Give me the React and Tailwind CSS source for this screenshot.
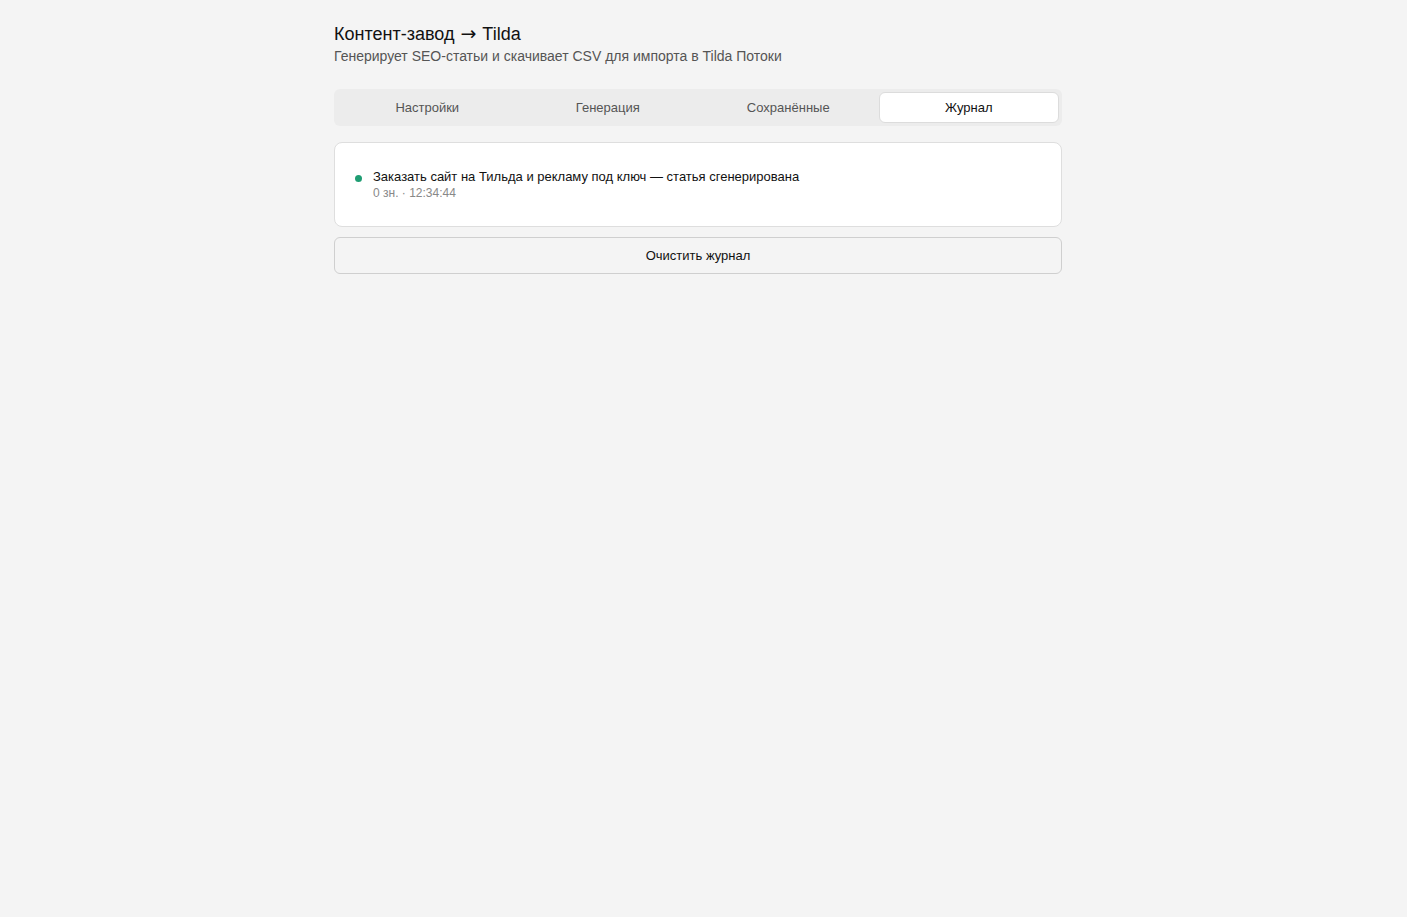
import React, { useState } from 'react';

const tabs = ['Настройки', 'Генерация', 'Сохранённые', 'Журнал'];

const logEntries = [
  {
    title: 'Заказать сайт на Тильда и рекламу под ключ — статья сгенерирована',
    chars: 0,
    time: '12:34:44',
  },
];

export default function App() {
  const [active, setActive] = useState('Журнал');
  const [entries, setEntries] = useState(logEntries);

  return (
    <div className="min-h-screen bg-[#f4f4f4] pr-[11px] font-['Liberation_Sans',Arial,sans-serif] text-[#111]">
      <div className="mx-auto max-w-3xl px-5 pt-[22px]">
        <h1 className="text-[18px] leading-[24px]">
          Контент-завод{' '}
          <span className="mx-[1px] font-['DejaVu_Sans',sans-serif] text-[19px] leading-[20px]">→</span> Tilda
        </h1>
        <p className="mt-[1px] text-[14px] leading-[19px] text-[#555]">
          Генерирует SEO-статьи и скачивает CSV для импорта в Tilda Потоки
        </p>

        <div className="mt-[23px] grid grid-cols-4 rounded-md bg-[#ececec] p-[3px]">
          {tabs.map((t) => (
            <button
              key={t}
              onClick={() => setActive(t)}
              className={
                t === active
                  ? 'h-[31px] rounded-md border border-[#dcdcdc] bg-white text-[13px] text-[#111]'
                  : 'h-[31px] rounded-md border border-transparent text-[13px] text-[#555]'
              }
            >
              {t}
            </button>
          ))}
        </div>

        <div className="mt-4 rounded-lg border border-[#dedede] bg-white px-5 py-[25px]">
          {entries.map((e, i) => (
            <div key={i} className="flex items-start gap-[11px]">
              <span className="mt-[7px] h-[7px] w-[7px] shrink-0 rounded-full bg-[#1f9d73]" />
              <div>
                <div className="text-[13px] leading-[17px]">{e.title}</div>
                <div className="text-[12px] leading-[16px] text-[#888]">
                  {e.chars} зн. · {e.time}
                </div>
              </div>
            </div>
          ))}
        </div>

        <button
          onClick={() => setEntries([])}
          className="mt-[10px] h-[37px] w-full rounded-md border border-[#cfcfcf] bg-[#f4f4f4] text-[13px] text-[#111]"
        >
          Очистить журнал
        </button>
      </div>
    </div>
  );
}
